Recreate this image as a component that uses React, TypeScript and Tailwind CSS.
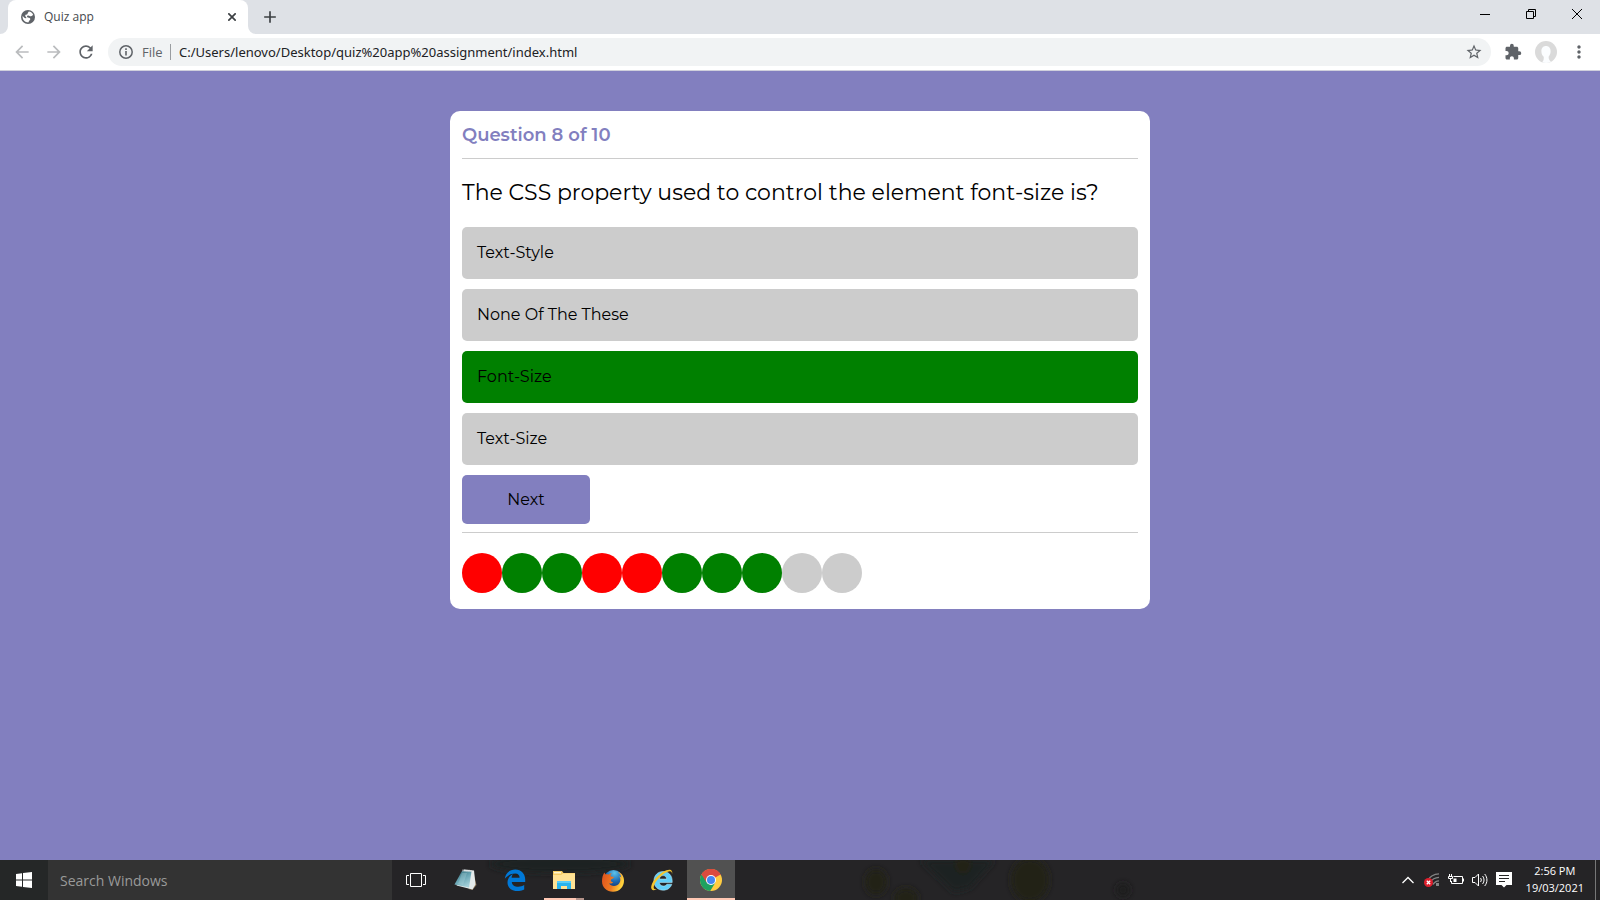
import type { ReactNode } from "react";
import { MdAdd, MdArrowBack, MdArrowForward, MdExtension, MdMoreVert, MdRefresh, MdStarBorder } from "react-icons/md";

const options = [
  { text: "Text-Style", correct: false },
  { text: "None Of The These", correct: false },
  { text: "Font-Size", correct: true },
  { text: "Text-Size", correct: false },
];

const results = ["wrong", "right", "right", "wrong", "wrong", "right", "right", "right", "none", "none"];

const dotColor: Record<string, string> = {
  wrong: "bg-[#ff0000]",
  right: "bg-[#008000]",
  none: "bg-[#cccccc]",
};

function TabStrip() {
  return (
    <div className="flex h-[34px] items-stretch bg-[#dee1e6] pl-2">
      <div className="relative flex w-60 items-center rounded-t-lg bg-white pr-2 pl-3 text-xs text-[#45494d]">
        <svg className="absolute bottom-0 -left-2 size-2" viewBox="0 0 8 8" aria-hidden="true">
          <path d="M8 0v8H0a8 8 0 0 0 8-8z" fill="#fff" />
        </svg>
        <svg className="absolute -right-2 bottom-0 size-2" viewBox="0 0 8 8" aria-hidden="true">
          <path d="M0 0v8h8a8 8 0 0 1-8-8z" fill="#fff" />
        </svg>
        <svg className="size-4" viewBox="0 0 16 16" aria-hidden="true">
          <circle cx="8" cy="8" r="7" fill="#5f6368" />
          <path d="M8.800 2.600c2 .2 3.700 1.500 4.400 3.300-1 .2-1.200 1.200-2.200 1.400-1.200.1-1.500-.8-2.600-.8-1 0-1.400.4-1.400 1.200 0 1 1.700.9 2.600 1.200 1 .4.900 1.800 0 2.300-.6.4-.6 1.400-1.300 2.200C5 13.400 2.600 11 2.600 8c0-.4 0-.7.1-1 1 1.200 1.700 2.200 3 2.300.7 0 .9-.6.500-1.100C5.500 7.500 5 7 5.300 6.200c.3-.7 1.300-.5 1.900-1 .6-.4.3-1 .7-1.500.2-.3.600-.6.9-1.100z" fill="#fff" />
        </svg>
        <span className="ml-2 flex-1">Quiz app</span>
        <button type="button" aria-label="Close tab" className="grid size-4 place-items-center text-[#3c4043]">
          <svg width="8" height="8" viewBox="0 0 8 8" stroke="currentColor" strokeWidth="1.700" aria-hidden="true"><path d="M.3.3l7.400 7.400M7.700.3L.3 7.700" /></svg>
        </button>
      </div>
      <button type="button" aria-label="New tab" className="ml-3 grid w-5 place-items-center text-[#3c4043]">
        <MdAdd className="size-5" />
      </button>
      <div className="ml-auto flex text-black">
        <button type="button" aria-label="Minimize" className="flex h-7 w-[46px] items-center justify-center">
          <svg width="10" height="10" viewBox="0 0 10 10" aria-hidden="true"><path d="M0 5.500h10" stroke="currentColor" /></svg>
        </button>
        <button type="button" aria-label="Restore" className="flex h-7 w-[46px] items-center justify-center">
          <svg width="10" height="10" viewBox="0 0 10 10" fill="none" stroke="currentColor" aria-hidden="true">
            <path d="M.5 2.500h7v7h-7zM2.500 2.500v-2h7v7h-2" />
          </svg>
        </button>
        <button type="button" aria-label="Close" className="flex h-7 w-[46px] items-center justify-center">
          <svg width="10" height="10" viewBox="0 0 10 10" stroke="currentColor" aria-hidden="true"><path d="M0 0l10 10M10 0L0 10" /></svg>
        </button>
      </div>
    </div>
  );
}

function Toolbar() {
  return (
    <div className="flex h-[37px] items-center border-b border-[#cfd0dc] bg-white pl-3 text-[#5f6368]">
      <button type="button" aria-label="Back" className="grid size-5 place-items-center text-[#babcbe]"><MdArrowBack className="size-5" /></button>
      <button type="button" aria-label="Forward" className="ml-3 grid size-5 place-items-center text-[#babcbe]"><MdArrowForward className="size-5" /></button>
      <button type="button" aria-label="Reload" className="ml-3 grid size-5 place-items-center"><MdRefresh className="size-5" /></button>
      <div className="ml-3 flex h-7 flex-1 items-center rounded-full bg-[#f1f3f4] pr-2 pl-2.5 text-[13px]">
        <svg width="16" height="16" viewBox="0 0 16 16" fill="none" stroke="currentColor" aria-hidden="true">
          <circle cx="8" cy="8" r="6.200" strokeWidth="1.500" />
          <path d="M8 7v4.500M8 4.300v1.700" strokeWidth="1.600" />
        </svg>
        <span className="ml-2 w-6 pt-0.5">File</span>
        <span className="mx-1 h-4 w-px bg-[#9a9da1]" />
        <input
          aria-label="Address"
          className="ml-1 min-w-0 flex-1 bg-transparent pt-0.5 font-['Segoe_UI','Noto_Sans',sans-serif] text-[#202124] outline-none"
          defaultValue="C:/Users/lenovo/Desktop/quiz%20app%20assignment/index.html"
        />
        <button type="button" aria-label="Bookmark this page"><MdStarBorder className="size-[18px]" /></button>
      </div>
      <button type="button" aria-label="Extensions" className="ml-3 grid size-5 place-items-center"><MdExtension className="size-[18px]" /></button>
      <button type="button" aria-label="Profile" className="ml-3">
        <svg width="22" height="22" viewBox="0 0 22 22" aria-hidden="true">
          <circle cx="11" cy="11" r="11" fill="#dadada" />
          <path d="M11 5c3 0 4.600 2.200 4.600 5.200 0 2.400-.9 4-1.900 5.200-.2 2 .3 3.700 2.300 5.300a11 11 0 0 1-9 .5c1.400-1.200 2-3 1.700-5.400C7.300 14.400 6.400 12.600 6.400 10.200 6.400 7.200 8 5 11 5z" fill="#fbfdff" />
        </svg>
      </button>
      <button type="button" aria-label="Menu" className="mr-[11px] ml-3 grid size-5 place-items-center"><MdMoreVert className="size-5" /></button>
    </div>
  );
}

function QuizCard() {
  return (
    <section className="mx-auto w-full max-w-[700px] rounded-[10px] bg-white px-3 pb-4 font-[Montserrat,Inter,sans-serif] text-black">
      <h1 className="border-b border-[#cccccc] pt-3 pb-2.5 text-lg leading-[25px] font-semibold text-[#827fbf]">Question 8 of 10</h1>
      <h2 className="py-[19px] text-[22px] leading-[30px]">The CSS property used to control the element font-size is?</h2>
      <div className="flex flex-col gap-2.5">
        {options.map((option) => (
          <button
            key={option.text}
            type="button"
            className={`h-[52px] rounded-[5px] px-[15px] text-left text-base ${option.correct ? "bg-[#008000]" : "bg-[#cccccc]"}`}
          >
            {option.text}
          </button>
        ))}
      </div>
      <button type="button" className="mt-2.5 block h-[49px] w-32 rounded-[5px] bg-[#827fbf] text-base">Next</button>
      <div className="mt-2 flex border-t border-[#cccccc] pt-5">
        {results.map((result, index) => (
          <span key={index} className={`size-10 rounded-full ${dotColor[result]}`} />
        ))}
      </div>
    </section>
  );
}

function TaskButton({ label, active, children }: { label: string; active?: boolean; children: ReactNode }) {
  return (
    <button
      type="button"
      aria-label={label}
      className={`relative flex h-10 w-12 items-center justify-center ${active ? "bg-[#515151]" : ""}`}
    >
      {children}
    </button>
  );
}

function TaskApps() {
  return (
    <div className="ml-px flex gap-px">
      <TaskButton label="Task view">
        <svg width="22" height="14" viewBox="0 0 22 14" fill="none" stroke="#fff" aria-hidden="true">
          <path d="M4.500.5h11v13h-11zM3 2.500H.5v9H3M17 2.500h2.500v9H17" />
        </svg>
      </TaskButton>
      <TaskButton label="Notepad">
        <svg width="24" height="24" viewBox="0 0 24 24" aria-hidden="true">
          <defs>
            <linearGradient id="note" x1="0" y1="0" x2="0.6" y2="1">
              <stop offset="0" stopColor="#2f6977" /><stop offset=".55" stopColor="#6aa7b5" /><stop offset="1" stopColor="#a4d0d9" />
            </linearGradient>
          </defs>
          <path d="M19 3l3.500 14-4 5-4-1z" fill="#8b7355" />
          <path d="M10 1.500l10 1 1.500 14-3 5-16-4z" fill="#e4eaea" />
          <path d="M8 3l9.500.5-2.500 16L.5 16.500z" fill="url(#note)" />
          <path d="M8.500 2.500l10 .5" stroke="#d6dadb" strokeWidth="2" strokeDasharray="1 1" />
          <path d="M8 5L4 16l5 1 4-12z" fill="#c4e2e8" opacity=".25" />
        </svg>
      </TaskButton>
      <TaskButton label="Edge">
        <svg width="22" height="22" viewBox="0 0 22 22" aria-hidden="true">
          <path d="M.8 9.800C1.500 4.300 5.300.4 11.200.4c6.300 0 10 4.300 10 10.200v2.300H7.800c.3 3.300 3.200 4.800 6.400 4.800 2.300 0 4.300-.6 6-1.600v4.500c-2 1-4.500 1.500-7.200 1.500-5.700 0-9.500-3.500-9.500-8.500 0-3.800 2-6.900 5.500-8.600-.8 1-1.300 2.200-1.400 3.800h8c0-2.700-1.400-4.300-4.400-4.300-4.200 0-7.500 1.900-10.400 5.300z" fill="#0078d7" />
        </svg>
      </TaskButton>
      <TaskButton label="File Explorer">
        <svg width="22" height="20" viewBox="0 0 22 20" aria-hidden="true">
          <path d="M0 1h9l1.500 2H22v16H0z" fill="#f6cd63" />
          <path d="M1 2h7v1.500H1z" fill="#fff5cc" />
          <path d="M0 5h8l2-1.500h12V19H0z" fill="#ffe294" />
          <path d="M4 19v-8h14v8h-4v-3H8v3z" fill="#28b4ee" />
          <path d="M4 11h14v2H4z" fill="#58cdfa" />
        </svg>
        <span className="absolute bottom-0 left-1 flex h-0.5 w-10">
          <span className="w-8 bg-[#ffc8b4]" />
          <span className="w-2 bg-[#b4938a]" />
        </span>
      </TaskButton>
      <TaskButton label="Firefox">
        <svg width="22" height="23" viewBox="0 0 22 23" aria-hidden="true">
          <defs>
            <radialGradient id="fxBlue" cx=".55" cy=".15" r=".8">
              <stop offset="0" stopColor="#5cc3ec" /><stop offset=".5" stopColor="#1f6db5" /><stop offset="1" stopColor="#132a62" />
            </radialGradient>
            <linearGradient id="fxFire" x1="0" y1="0" x2="1" y2=".3">
              <stop offset="0" stopColor="#dd4e1d" /><stop offset=".6" stopColor="#ee7b22" /><stop offset="1" stopColor="#ffd23c" />
            </linearGradient>
          </defs>
          <circle cx="11.500" cy="11" r="10" fill="url(#fxBlue)" />
          <path d="M2.500 3.500c.2 1 .7 1.700 1.300 2 1.200-.4 2.200-.3 3 .2 1-1.200 2.200-1.500 3-1.500-1 .9-1.500 1.900-1.300 3 1 .5 2.300.3 3.400.9-.2 1.500-2 1.900-3 2.600-.3 1.600.6 2.500 2.300 2.500-1.100 1.500-3 1.500-4.200 1 1.500 2.600 5 3.700 8 2 3.600-2 4.200-6 2.300-9 .9.300 1.500.8 2 1.400-.2-2.200-1.400-4.200-3.500-5.800C20 4.200 22 7.500 22 11.800 22 18 17.300 22.800 11 22.800S0 18.200 0 12.300C0 8.500.9 5.800 2.500 3.500z" fill="url(#fxFire)" />
        </svg>
      </TaskButton>
      <TaskButton label="Internet Explorer">
        <svg width="24" height="24" viewBox="0 0 24 24" aria-hidden="true">
          <path d="M13 3.500c5.400 0 9.200 3.800 9.200 9.500v1.500H9.300c.3 2.200 1.900 3.500 4 3.500 1.700 0 2.900-.6 3.600-1.800h4.900c-1.300 3.900-4.500 6-8.700 6-5.400 0-9.200-3.900-9.200-9.200 0-5.600 3.900-9.500 9.100-9.500zM9.400 11h7.300c-.3-2.200-1.700-3.400-3.600-3.400-2 0-3.400 1.300-3.700 3.400z" fill="#62cff8" stroke="#c5efff" strokeWidth=".5" />
          <path d="M22 6.500c1-3.500-.8-6-5.500-4.300C10.300 4.400 2.600 12 1.300 18c-.9 4.500 2.400 5.200 6.800 2.700-3.300 1.200-5 .3-4.200-2.700C5.300 12.800 11.600 6.500 17 4c3.800-1.700 5.200-.6 5 2.500z" fill="#f6c52d" />
        </svg>
      </TaskButton>
      <TaskButton label="Chrome" active>
        <svg width="22" height="22" viewBox="0 0 22 22" aria-hidden="true">
          <circle cx="11" cy="11" r="11" fill="#ffcd42" />
          <path d="M11 11L1.470 5.500A11 11 0 0 1 20.530 5.500z" fill="#dc4b3e" />
          <path d="M11 11L1.470 5.500A11 11 0 0 0 10.200 22L15.400 13.500z" fill="#1da260" />
          <path d="M11 6h9.800A11 11 0 0 0 1.470 5.500L6.600 13.500z" fill="#dc4b3e" />
          <circle cx="11" cy="11" r="5" fill="#fff" />
          <circle cx="11" cy="11" r="4" fill="#4587f3" />
        </svg>
        <span className="absolute inset-x-0 bottom-0 h-0.5 bg-[#ffc8b4]" />
      </TaskButton>
    </div>
  );
}

function Tray() {
  return (
    <div className="flex h-full items-center text-white">
      <button type="button" aria-label="Show hidden icons" className="flex w-6 justify-center">
        <svg width="12" height="8" viewBox="0 0 12 8" fill="none" stroke="currentColor" strokeWidth="1.300" aria-hidden="true"><path d="M.5 7L6 1.500 11.500 7" /></svg>
      </button>
      <button type="button" aria-label="Network" className="flex w-6 justify-center">
        <svg width="16" height="14" viewBox="0 0 16 14" aria-hidden="true">
          <g fill="none" stroke="#858585" strokeWidth="1.300">
            <path d="M3.500 7.500C5.500 4 9.500 1 15 .8M6 9.500c2-3.200 5-5 9-5.200M9 11.500c1.300-2.200 3.400-3.600 6-3.700" />
          </g>
          <path d="M12 10h3v3h-3z" fill="#858585" />
          <circle cx="4.500" cy="9.500" r="4.500" fill="#dd1f2d" />
          <path d="M2.800 7.800l3.400 3.400M6.200 7.800l-3.400 3.400" stroke="#fff" strokeWidth="1.300" />
        </svg>
      </button>
      <button type="button" aria-label="Battery" className="flex w-6 justify-center">
        <svg width="16" height="12" viewBox="0 0 16 12" fill="none" stroke="currentColor" aria-hidden="true">
          <path d="M5.500 2.500h9v7H3.500V7M15.500 4.500v3M1.500 0v2M3.500 0v2M.5 2.500h4v2h-4zM2.500 5v3" />
          <path d="M5.500 4.500h3v3.500h-3z" fill="currentColor" stroke="none" />
        </svg>
      </button>
      <button type="button" aria-label="Volume" className="flex w-6 justify-center">
        <svg width="16" height="14" viewBox="0 0 16 14" fill="none" stroke="currentColor" aria-hidden="true">
          <path d="M.5 4.500h2.500L6.500 1v12L3 9.500H.5zM8.500 5c1 1.200 1 2.800 0 4M10.500 3c2 2.400 2 5.600 0 8M12.700 1c3 3.600 3 8.400 0 12" />
        </svg>
      </button>
      <button type="button" aria-label="Notifications" className="flex w-6 justify-center">
        <svg width="16" height="16" viewBox="0 0 16 16" aria-hidden="true">
          <path d="M0 0h16v13h-5.500L8 15.500 5.500 13H0z" fill="#fff" />
          <path d="M3 3.500h10M3 6.500h10M3 9.500h6" stroke="#262626" />
        </svg>
      </button>
      <button type="button" className="mr-[11px] ml-2.5 pb-0.5 text-center text-[11px] leading-[17px]">
        <span className="block">2:56 PM</span>
        <span className="block">19/03/2021</span>
      </button>
      <span className="mr-1 h-full w-px bg-[#777777]" />
    </div>
  );
}

function TaskbarBackdrop() {
  return (
    <svg className="absolute inset-0 size-full" viewBox="0 0 1600 40" preserveAspectRatio="none" aria-hidden="true">
      <defs>
        <filter id="soft" x="-50%" y="-50%" width="200%" height="200%"><feGaussianBlur stdDeviation="3" /></filter>
      </defs>
      <g filter="url(#soft)">
        <path d="M920 0h75l-25 28-16 4z" fill="#1e2324" />
        <ellipse cx="560" cy="4" rx="70" ry="9" fill="#1c2321" />
        <ellipse cx="876" cy="22" rx="11" ry="13" fill="#222116" />
        <ellipse cx="906" cy="38" rx="12" ry="10" fill="#222116" />
        <ellipse cx="963" cy="5" rx="8" ry="9" fill="#222116" />
        <ellipse cx="1030" cy="20" rx="19" ry="22" fill="#212117" />
        <ellipse cx="1123" cy="30" rx="7" ry="7" fill="#1e1c1f" />
      </g>
    </svg>
  );
}

function Taskbar() {
  return (
    <footer className="relative h-10 overflow-hidden bg-[#252426]">
      <TaskbarBackdrop />
      <div className="relative flex h-full items-center">
        <button type="button" aria-label="Start" className="flex h-full w-12 items-center justify-center bg-[#252727]">
          <svg width="16" height="16" viewBox="0 0 16 16" fill="#fff" aria-hidden="true">
            <path d="M0 2l6-.8v6.300H0zM7 1l9-1v7.500H7zM0 8.500h6v6.300L0 14zM7 8.500h9V16l-9-1z" />
          </svg>
        </button>
        <input
          type="text"
          aria-label="Search Windows"
          placeholder="Search Windows"
          className="h-full w-[344px] bg-[#333333] px-3 text-sm outline-none placeholder:text-[#9a9a9a]"
        />
        <TaskApps />
        <div className="ml-auto h-full"><Tray /></div>
      </div>
    </footer>
  );
}

export default function App() {
  return (
    <div className="flex min-h-screen flex-col bg-[#827fbf] font-['Segoe_UI','Open_Sans','Noto_Sans',sans-serif]">
      <header>
        <TabStrip />
        <Toolbar />
      </header>
      <main className="flex-1 py-10">
        <QuizCard />
      </main>
      <Taskbar />
    </div>
  );
}
